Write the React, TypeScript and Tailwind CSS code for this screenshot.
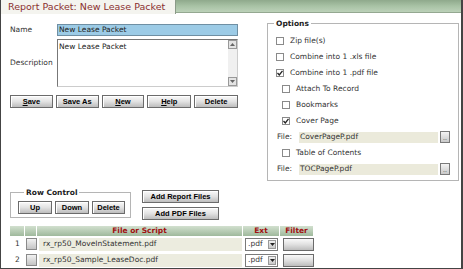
import React from 'react';

const font = { fontFamily: '"DejaVu Sans", Verdana, sans-serif' };

function Btn({ label, u, className = '' }: { label: string; u?: number; className?: string }) {
  return (
    <button
      className={
        'h-[13px] flex items-center justify-center border border-[#6b6b6b] bg-gradient-to-b from-[#fafafa] via-[#e2e2e2] to-[#bdbdbd] text-[7.5px] font-bold text-black leading-none shadow-[inset_1px_1px_0_#fff] ' +
        className
      }
      style={{ fontFamily: '"Liberation Sans", Arial, sans-serif' }}
    >
      {u === undefined ? (
        label
      ) : (
        <>
          <span className="underline">{label[u]}</span>
          {label.slice(u + 1)}
        </>
      )}
    </button>
  );
}

function Check({ checked, label, indent }: { checked?: boolean; label: string; indent?: boolean }) {
  return (
    <div className={'flex items-center h-[16px] ' + (indent ? 'pl-[14px]' : 'pl-[8px]')}>
      <div className="w-[8px] h-[8px] border border-[#8a8a8a] bg-white flex items-center justify-center">
        {checked && (
          <svg width="6" height="6" viewBox="0 0 6 6">
            <path d="M0.5 3 L2.3 5 L5.5 0.8" stroke="#222" strokeWidth="1.3" fill="none" />
          </svg>
        )}
      </div>
      <span className="ml-[6px]">{label}</span>
    </div>
  );
}

function FileRow({ name }: { name: string }) {
  return (
    <div className="flex items-center h-[16px] pl-[9px]">
      <span className="w-[22px]">File:</span>
      <div className="w-[139px] h-[11px] bg-[#ebeadb] pl-[1px] flex items-center leading-none">{name}</div>
      <div className="ml-[2px] w-[10px] h-[12px] border border-[#7a7a7a] bg-gradient-to-b from-[#f4f4f4] to-[#c9c9c9] flex items-end justify-center text-[6px] leading-[8px] text-[#333]">
        ..
      </div>
    </div>
  );
}

function TableRow({ n, name }: { n: number; name: string }) {
  return (
    <div className="flex items-center h-[16px]">
      <div className="w-[15px] pl-[5px] text-[#333]">{n}</div>
      <div className="w-[11px] h-[12px] border border-[#8a8a8a] bg-gradient-to-b from-[#f2f2f2] to-[#c4c4c4] ml-[1px]"></div>
      <div className="ml-[2px] w-[203px] h-[13px] bg-[#ececdf] flex items-center pl-[4px] text-[#333]">{name}</div>
      <div className="ml-[3px] w-[33px] h-[13px] border border-[#7a7a7a] bg-white flex items-center justify-between pl-[2px] pr-[1px]">
        <span>.pdf</span>
        <div className="w-[8px] h-[9px] bg-gradient-to-b from-[#f0f0f0] to-[#c8c8c8] border border-[#999] flex items-center justify-center">
          <svg width="5" height="3" viewBox="0 0 5 3">
            <path d="M0 0 L5 0 L2.5 3 Z" fill="#222" />
          </svg>
        </div>
      </div>
      <div className="ml-[5px] w-[31px] h-[13px] border border-[#6b6b6b] bg-gradient-to-b from-[#fafafa] via-[#e0e0e0] to-[#bdbdbd]"></div>
    </div>
  );
}

export default function App() {
  return (
    <div
      className="w-[463px] h-[269px] bg-white border-l border-[#444] border-r-2 border-r-[#444] border-b border-b-[#444] text-[7.5px] text-[#333] overflow-hidden"
      style={font}
    >
      {/* header */}
      <div className="flex h-[14px]">
        <div className="w-[175px] bg-[#f4f4ef] border-r border-[#8a9a88] pl-[7px] flex items-center text-[9.5px] text-[#8b3030] leading-none">
          Report Packet: New Lease Packet
        </div>
        <div className="flex-1 h-[13px] bg-gradient-to-b from-[#8fa98c] via-[#a8c2a5] to-[#bcd1b9] border-b border-[#94a891]"></div>
      </div>

      <div className="flex pl-[8px]">
        {/* left form */}
        <div className="w-[229px] pt-[9px]">
          <div className="flex items-center h-[13px]">
            <span className="w-[48px] pl-[1px]">Name</span>
            <div className="w-[181px] h-[12px] bg-[#9ccbe6] border border-[#6f8fa3] flex items-center pl-[1px] text-[#222]">New Lease Packet</div>
          </div>
          <div className="flex items-center mt-[3px] h-[48px]">
            <span className="w-[48px] pl-[1px]">Description</span>
            <div className="w-[181px] h-[48px] border border-[#777] border-r-[#ccc] border-b-[#ccc] bg-white flex">
              <div className="flex-1 pl-[1px] pt-[1px] text-[#222]">New Lease Packet</div>
              <div className="w-[9px] bg-[#f0f0f0] flex flex-col justify-between">
                <div className="h-[9px] border border-[#999] bg-[#e4e4e4] flex items-center justify-center">
                  <svg width="5" height="3" viewBox="0 0 5 3"><path d="M0 3 L5 3 L2.5 0 Z" fill="#666" /></svg>
                </div>
                <div className="h-[9px] border border-[#999] bg-[#e4e4e4] flex items-center justify-center">
                  <svg width="5" height="3" viewBox="0 0 5 3"><path d="M0 0 L5 0 L2.5 3 Z" fill="#666" /></svg>
                </div>
              </div>
            </div>
          </div>
          <div className="flex gap-[3px] mt-[8px] pl-[1px]">
            <Btn label="Save" u={0} className="w-[43px]" />
            <Btn label="Save As" className="w-[43px]" />
            <Btn label="New" u={0} className="w-[43px]" />
            <Btn label="Help" u={0} className="w-[44px]" />
            <Btn label="Delete" className="w-[44px]" />
          </div>
        </div>

        {/* options */}
        <fieldset className="ml-[29px] mt-[5px] w-[192px] h-[162px] border border-[#b5b5b5] shadow-[inset_1px_1px_0_#fff] pt-[5px] min-w-0">
          <legend className="ml-[6px] px-[2px] font-bold text-[#222] leading-[9px]">Options</legend>
          <div>
            <Check label="Zip file(s)" />
            <Check label="Combine into 1 .xls file" />
            <Check label="Combine into 1 .pdf file" checked />
            <Check label="Attach To Record" indent />
            <Check label="Bookmarks" indent />
            <Check label="Cover Page" indent checked />
            <FileRow name="CoverPageP.pdf" />
            <Check label="Table of Contents" indent />
            <FileRow name="TOCPageP.pdf" />
          </div>
        </fieldset>
      </div>

      {/* row control */}
      <div className="flex pl-[8px] mt-[7px]">
        <fieldset className="w-[121px] h-[30px] border border-[#b5b5b5] ml-[1px] flex gap-[3px] pl-[7px] pt-[4px] min-w-0">
          <legend className="ml-[6px] px-[2px] font-bold text-[#222] leading-[9px]">Row Control</legend>
          <Btn label="Up" className="w-[34px]" />
          <Btn label="Down" className="w-[34px]" />
          <Btn label="Delete" className="w-[33px]" />
        </fieldset>
        <div className="ml-[11px] flex flex-col gap-[4px] pt-[2px]">
          <Btn label="Add Report Files" className="w-[77px]" />
          <Btn label="Add PDF Files" className="w-[77px]" />
        </div>
      </div>

      {/* table */}
      <div className="pl-[9px] mt-[6px]">
        <div className="flex h-[10px] gap-[1px] font-bold text-[#a01010] leading-none">
          <div className="w-[14px] bg-gradient-to-b from-[#d2e0cf] to-[#9fb99c]"></div>
          <div className="w-[11px] bg-gradient-to-b from-[#d2e0cf] to-[#9fb99c]"></div>
          <div className="w-[205px] bg-gradient-to-b from-[#d2e0cf] to-[#9fb99c] flex items-center justify-center">File or Script</div>
          <div className="w-[36px] bg-gradient-to-b from-[#d2e0cf] to-[#9fb99c] flex items-center justify-center">Ext</div>
          <div className="w-[33px] bg-gradient-to-b from-[#d2e0cf] to-[#9fb99c] flex items-center justify-center">Filter</div>
        </div>
        <div>
          <TableRow n={1} name="rx_rp50_MoveInStatement.pdf" />
          <TableRow n={2} name="rx_rp50_Sample_LeaseDoc.pdf" />
        </div>
      </div>
    </div>
  );
}
